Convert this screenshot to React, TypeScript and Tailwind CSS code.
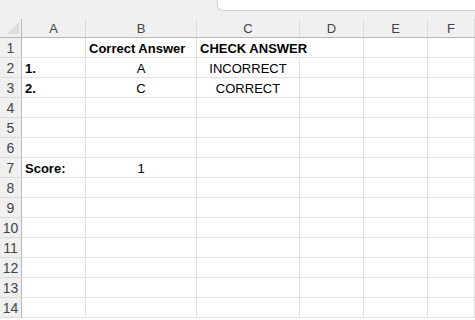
import React from "react";

const cols = ["A", "B", "C", "D", "E", "F"];
const widths = ["w-[64px]", "w-[111px]", "w-[103px]", "w-[64px]", "w-[64px]", "flex-1"];

type Cell = { text: string; bold?: boolean; align?: "left" | "center"; overflow?: boolean };

const data: Record<number, Record<number, Cell>> = {
  1: {
    1: { text: "Correct Answer", bold: true },
    2: { text: "CHECK ANSWER", bold: true, overflow: true },
  },
  2: {
    0: { text: "1.", bold: true },
    1: { text: "A", align: "center" },
    2: { text: "INCORRECT", align: "center" },
  },
  3: {
    0: { text: "2.", bold: true },
    1: { text: "C", align: "center" },
    2: { text: "CORRECT", align: "center" },
  },
  7: {
    0: { text: "Score:", bold: true },
    1: { text: "1", align: "center" },
  },
};

const rows = Array.from({ length: 14 }, (_, i) => i + 1);

const App = () => {
  return (
    <div
      className="w-[475px] h-[320px] overflow-hidden bg-white text-[13px] text-black"
      style={{ fontFamily: '"Liberation Sans", Arial, sans-serif' }}
    >
      {/* top strip */}
      <div className="h-[19px] bg-[#f0f0f0] flex justify-end">
        <div className="w-[258px] h-[11px] bg-white border-l border-b border-[#d0d0d0] rounded-bl-[6px]" />
      </div>

      {/* column headers */}
      <div className="flex h-[19px] bg-[#f0f0f0] border-b border-[#b8b8b8]">
        <div className="relative w-[22px] shrink-0 border-r border-[#b8b8b8]">
          <div className="absolute right-[2px] bottom-[3px] w-0 h-0 border-l-[12px] border-l-transparent border-b-[12px] border-b-[#dcdcdc]" />
        </div>
        {cols.map((c, i) => (
          <div
            key={c}
            className={`${widths[i]} shrink-0 flex items-center justify-center pt-[1px] border-r border-[#dcdcdc] text-[#444] text-[13px]`}
          >
            {c}
          </div>
        ))}
      </div>

      {/* rows */}
      {rows.map((r) => (
        <div key={r} className="flex h-[20px]">
          <div className="w-[22px] shrink-0 bg-[#f0f0f0] border-r border-b border-[#b8b8b8] border-b-[#dcdcdc] flex items-center justify-center pt-[1px] text-[#444] text-[14px]">
            {r}
          </div>
          {cols.map((c, i) => {
            const cell = data[r]?.[i];
            return (
              <div
                key={c}
                className={`${widths[i]} shrink-0 relative border-r border-b border-[#e1e1e1] ${
                  cell?.overflow ? "border-r-transparent" : ""
                }`}
              >
                {cell && (
                  <div
                    className={`absolute inset-y-0 flex items-center pt-[2px] whitespace-nowrap ${
                      cell.align === "center" ? "inset-x-0 justify-center" : "left-[3px]"
                    } ${cell.bold ? "font-bold" : ""}`}
                  >
                    {cell.text}
                  </div>
                )}
              </div>
            );
          })}
        </div>
      ))}
    </div>
  );
};

export default App;
